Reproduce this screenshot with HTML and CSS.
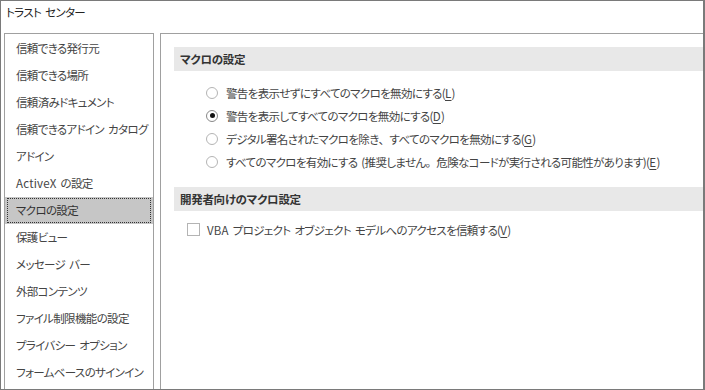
FILE: index.html
```html
<!DOCTYPE html>
<html lang="ja">
<head>
<meta charset="utf-8">
<title>トラスト センター</title>
<link rel="stylesheet" href="styles.css">
</head>
<body>
<div class="window">
  <div class="title">トラスト センター</div>
  <div class="content">
    <ul class="nav">
      <li>信頼できる発行元</li>
      <li>信頼できる場所</li>
      <li>信頼済みドキュメント</li>
      <li>信頼できるアドイン カタログ</li>
      <li>アドイン</li>
      <li><span class="lat">ActiveX</span> の設定</li>
      <li class="selected"><span class="focus">マクロの設定</span></li>
      <li>保護ビュー</li>
      <li>メッセージ バー</li>
      <li>外部コンテンツ</li>
      <li>ファイル制限機能の設定</li>
      <li>プライバシー オプション</li>
      <li>フォームベースのサインイン</li>
    </ul>
    <div class="main">
      <div class="section-head">マクロの設定</div>
      <div class="options">
        <label class="opt"><span class="radio"></span><span>警告を表示せずにすべてのマクロを無効にする(<u>L</u>)</span></label>
        <label class="opt"><span class="radio checked"></span><span>警告を表示してすべてのマクロを無効にする(<u>D</u>)</span></label>
        <label class="opt"><span class="radio"></span><span>デジタル署名されたマクロを除き<span class="punct">、</span>すべてのマクロを無効にする(<u>G</u>)</span></label>
        <label class="opt"><span class="radio"></span><span>すべてのマクロを有効にする (推奨しません<span class="punct">。</span>危険なコードが実行される可能性があります)(<u>E</u>)</span></label>
      </div>
      <div class="section-head second">開発者向けのマクロ設定</div>
      <label class="check-row"><span class="check"></span><span><span class="lat">VBA</span> プロジェクト オブジェクト モデルへのアクセスを信頼する(<u>V</u>)</span></label>
    </div>
  </div>
</div>
</body>
</html>
```

FILE: styles.css
```css
* { box-sizing: border-box; }
html, body { margin: 0; padding: 0; background: #fff; }
body {
  font-family: "Noto Sans CJK JP", "Noto Sans", sans-serif;
  font-size: 11.5px;
  letter-spacing: -0.65px;
  word-spacing: 2px;
  color: #444;
  font-feature-settings: "palt";
}
.punct { font-feature-settings: normal; }
.lat { letter-spacing: 0.2px; }
u { letter-spacing: 0.3px; text-underline-offset: 2px; }
.window {
  width: 705px;
  height: 390px;
  border: 1px solid #7a7a7a;
  border-right-width: 2px;
  overflow: hidden;
  display: flex;
  flex-direction: column;
}
.title {
  height: 32px;
  padding: 3px 0 0 5px;
  line-height: 16px;
  color: #222;
}
.content {
  flex: 1;
  display: flex;
  gap: 6px;
  padding-left: 3px;
}
.nav {
  list-style: none;
  margin: 0;
  padding: 1px 0 0 0;
  width: 150px;
  border: 1px solid #a0a0a0;
  border-bottom: none;
}
.nav li {
  height: 27px;
  line-height: 27px;
  padding-left: 11px;
  white-space: nowrap;
}
.nav li.selected {
  background: #c6c6c6;
  padding: 1px 2px 1px 2px;
  line-height: 23px;
}
.nav .focus {
  display: block;
  height: 25px;
  border: 1px dotted #333;
  padding-left: 8px;
  color: #333;
}
.main {
  flex: 1;
  border-left: 1px solid #a0a0a0;
  border-top: 1px solid #a0a0a0;
  padding: 13px 0 0 13px;
}
.section-head {
  height: 24px;
  line-height: 24px;
  background: #e8e8e8;
  padding-left: 6px;
  font-weight: bold;
  color: #333;
  letter-spacing: -0.3px;
}
.section-head.second { margin-top: 14px; }
.options {
  margin-top: 10px;
  padding-left: 32px;
}
.opt, .check-row {
  display: flex;
  align-items: center;
  height: 23px;
  white-space: nowrap;
}
.radio {
  width: 12px;
  height: 12px;
  border: 1px solid #b4b4b4;
  border-radius: 50%;
  margin-right: 8px;
  flex: none;
  display: flex;
  align-items: center;
  justify-content: center;
}
.radio.checked { border-color: #888; }
.radio.checked::after {
  content: "";
  width: 5px;
  height: 5px;
  border-radius: 50%;
  background: #111;
}
.check-row {
  margin-top: 7px;
  padding-left: 13px;
}
.check {
  width: 13px;
  height: 13px;
  border: 1px solid #b4b4b4;
  margin-right: 7px;
  flex: none;
}
```
